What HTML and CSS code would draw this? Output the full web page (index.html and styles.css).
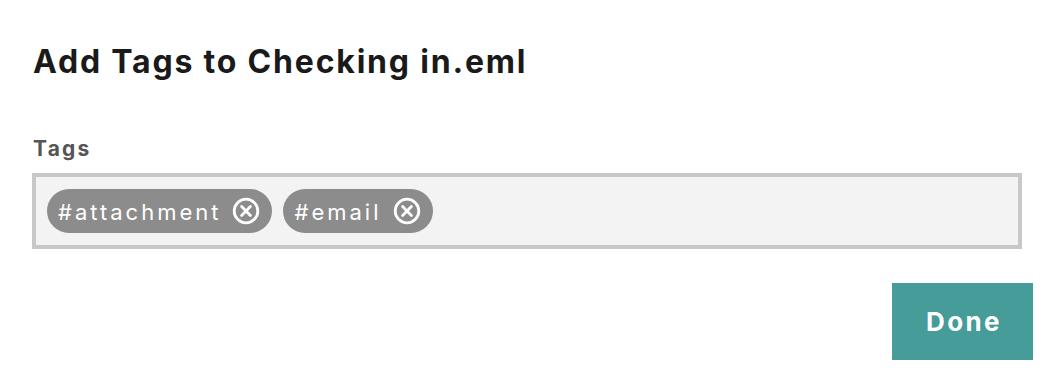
FILE: index.html
```html
<!DOCTYPE html>
<html>
<head>
<meta charset="utf-8">
<link rel="stylesheet" href="styles.css">
</head>
<body>
<div class="dialog">
  <h1 class="title">Add Tags to Checking in.eml</h1>
  <label class="label">Tags</label>
  <div class="tag-input">
    <span class="chip"><span class="chip-text">#attachment</span><svg class="x" viewBox="0 0 28 28" width="28" height="28"><circle cx="14" cy="14" r="11.8" fill="none" stroke="#fff" stroke-width="2.8"/><path d="M9.6 9.6L18.4 18.4M18.4 9.6L9.6 18.4" stroke="#fff" stroke-width="2.8" stroke-linecap="round"/></svg></span>
    <span class="chip"><span class="chip-text">#email</span><svg class="x" viewBox="0 0 28 28" width="28" height="28"><circle cx="14" cy="14" r="11.8" fill="none" stroke="#fff" stroke-width="2.8"/><path d="M9.6 9.6L18.4 18.4M18.4 9.6L9.6 18.4" stroke="#fff" stroke-width="2.8" stroke-linecap="round"/></svg></span>
  </div>
  <div class="actions">
    <button class="done">Done</button>
  </div>
</div>
</body>
</html>
```

FILE: styles.css
```css
html, body {
  margin: 0;
  padding: 0;
  background: #fff;
}
body {
  font-family: Inter, "Liberation Sans", Arial, sans-serif;
}
.dialog {
  padding: 44px 20px 0 32px;
}
.title {
  margin: 0 0 0 1px;
  font-size: 32px;
  font-weight: 700;
  color: #1a1a1a;
  line-height: 36px;
  letter-spacing: 1.8px;
}
.label {
  display: block;
  margin: 57px 0 0 1px;
  font-size: 21px;
  font-weight: 700;
  color: #555;
  line-height: 24px;
  letter-spacing: 2.2px;
}
.tag-input {
  margin-top: 12px;
  margin-right: 11px;
  box-sizing: border-box;
  height: 76px;
  border: 4px solid #c8c8c8;
  background: #f3f3f3;
  display: flex;
  align-items: center;
  gap: 11px;
  padding: 0 11px;
}
.chip {
  display: inline-flex;
  align-items: center;
  height: 44px;
  border-radius: 22px;
  background: #8c8c8c;
  color: #fff;
  padding: 0 12px 0 11px;
  gap: 11px;
}
.chip-text {
  font-size: 22px;
  letter-spacing: 3px;
  line-height: 26px;
  margin-top: 1px;
}
.x {
  display: block;
}
.actions {
  display: flex;
  justify-content: flex-end;
  margin-top: 34px;
}
.done {
  width: 141px;
  height: 77px;
  border: none;
  background: #459c98;
  color: #fff;
  font-family: Inter, "Liberation Sans", Arial, sans-serif;
  font-size: 26px;
  font-weight: 700;
  letter-spacing: 2.4px;
  padding: 0 0 0 3px;
}
```
